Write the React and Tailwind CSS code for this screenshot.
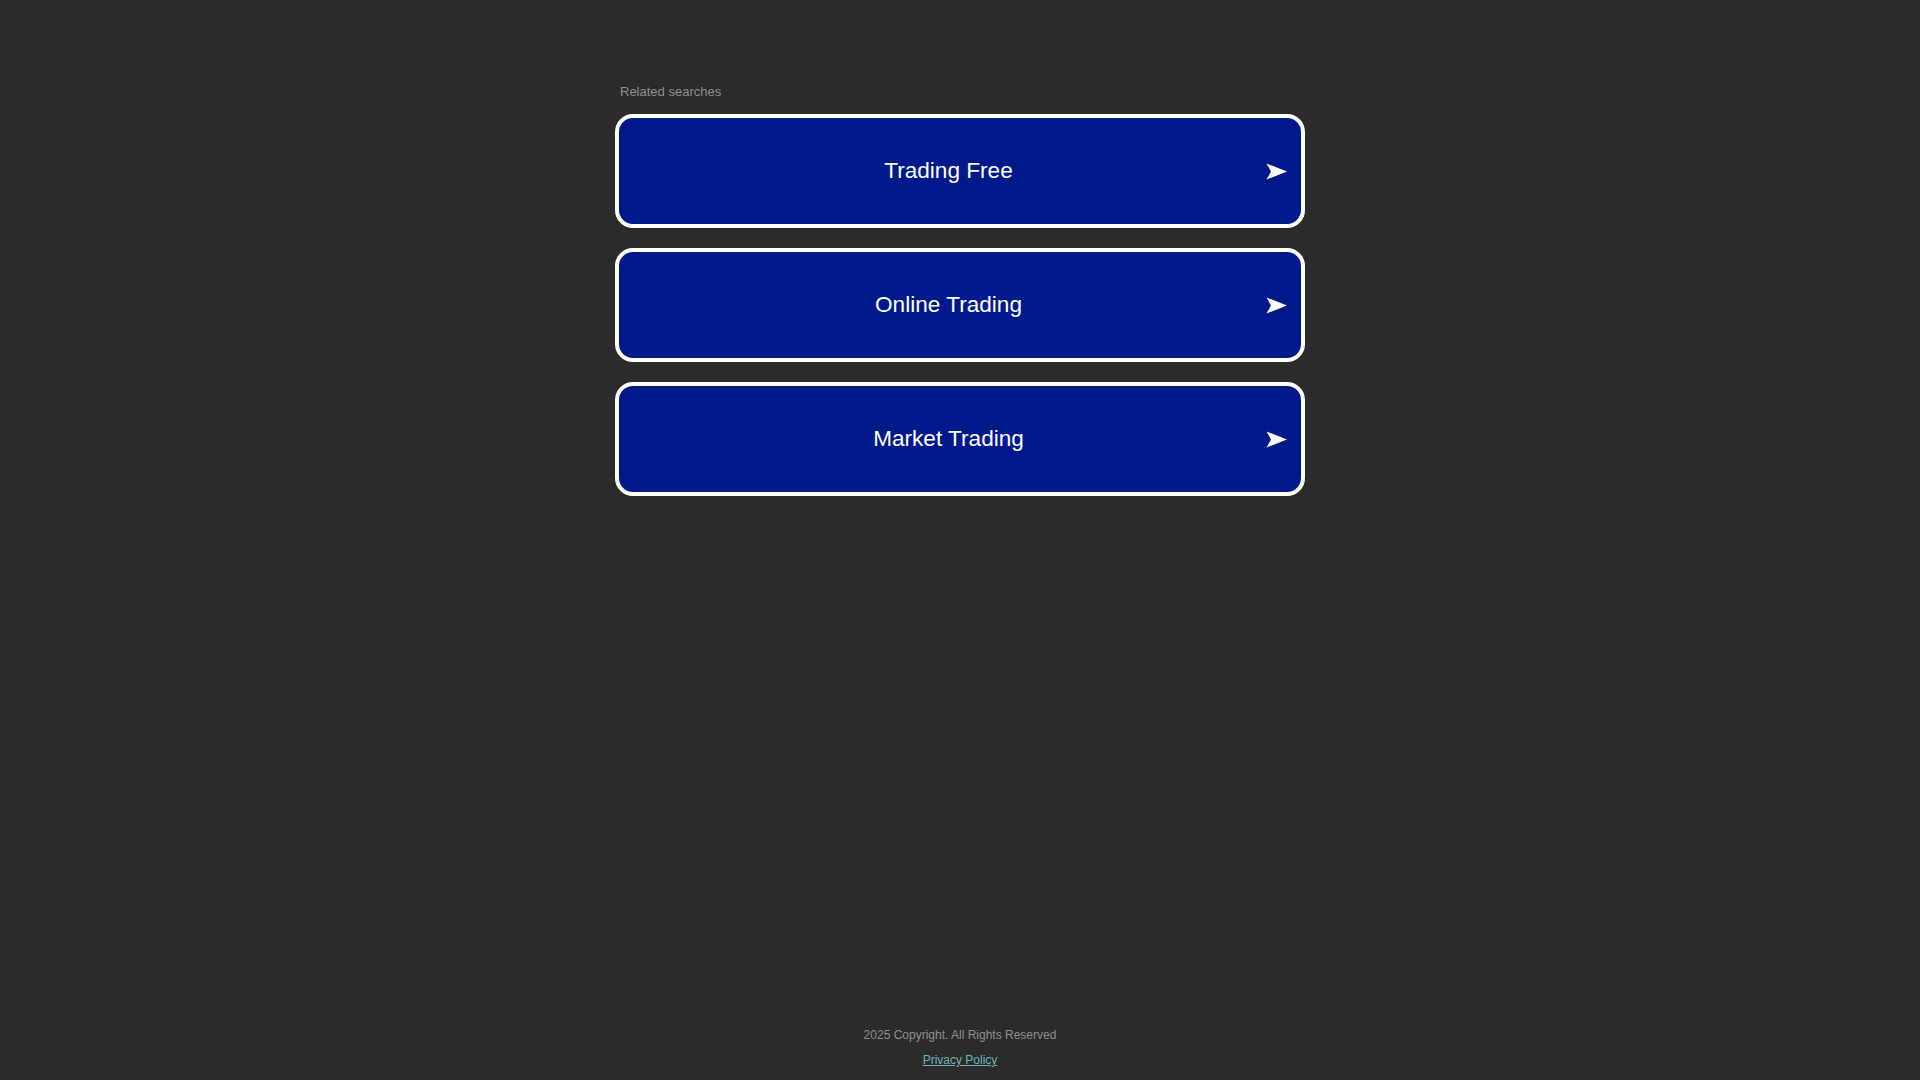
export default function App() {
  const items = ["Trading Free", "Online Trading", "Market Trading"];
  return (
    <div className="min-h-screen bg-[#2b2b2b] flex flex-col items-center" style={{ fontFamily: '"Liberation Sans", Arial, sans-serif' }}>
      <main className="w-[690px] pt-[84px]">
        <div className="pl-[5px] text-[13px] leading-[15px] text-[#8f8f8f]">Related searches</div>
        <div className="mt-[15px] flex flex-col gap-[20px]">
          {items.map((t) => (
            <a
              key={t}
              href="#"
              className="h-[114px] border-4 border-white rounded-[18px] bg-[#011a8b] flex items-center pl-[12px] pr-[14px] text-white"
            >
              <span className="flex-1 text-center text-[22.6px] leading-[26px]">{t}</span>
              <svg width="21" height="17" viewBox="0 0 21 17" className="shrink-0">
                <path d="M0.5 0.5 L21 8.5 L0.5 16.5 L5 8.5 Z" fill="#ffffff" />
              </svg>
            </a>
          ))}
        </div>
      </main>
      <footer className="mt-auto pb-[12px] flex flex-col items-center gap-[10px] text-[12px] leading-[15px]">
        <div className="text-[#8f8f8f]">2025 Copyright. All Rights Reserved</div>
        <a href="#" className="text-[#6fb3b8] underline">Privacy Policy</a>
      </footer>
    </div>
  );
}
